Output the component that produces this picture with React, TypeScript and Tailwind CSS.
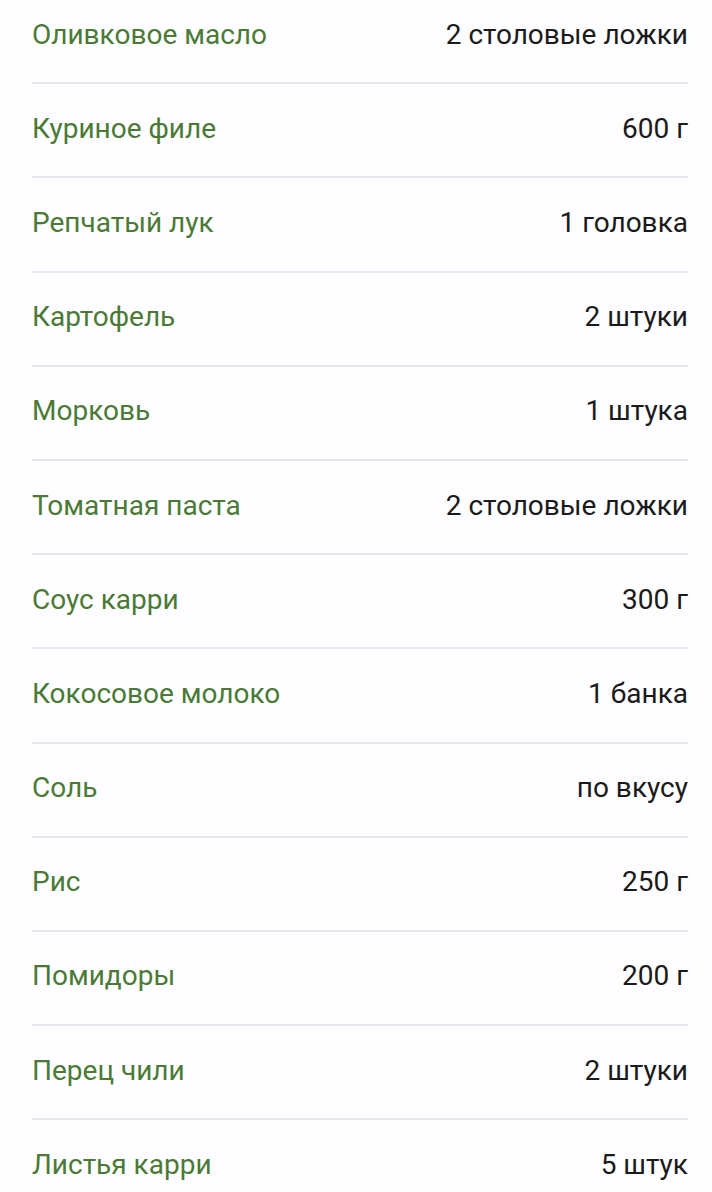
const ingredients = [
  { name: "Оливковое масло", amount: "2 столовые ложки" },
  { name: "Куриное филе", amount: "600 г" },
  { name: "Репчатый лук", amount: "1 головка" },
  { name: "Картофель", amount: "2 штуки" },
  { name: "Морковь", amount: "1 штука" },
  { name: "Томатная паста", amount: "2 столовые ложки" },
  { name: "Соус карри", amount: "300 г" },
  { name: "Кокосовое молоко", amount: "1 банка" },
  { name: "Соль", amount: "по вкусу" },
  { name: "Рис", amount: "250 г" },
  { name: "Помидоры", amount: "200 г" },
  { name: "Перец чили", amount: "2 штуки" },
  { name: "Листья карри", amount: "5 штук" },
];

const App = () => {
  return (
    <div className="min-h-[1192px] w-[712px] overflow-hidden bg-[#fefdff] font-['Roboto',sans-serif]">
      <ul className="mt-[-10px] px-[32px] pr-[24px]">
        {ingredients.map((item) => (
          <li
            key={item.name}
            className="flex h-[94.2px] items-center justify-between border-b-2 border-[#e8e6ea] pb-[3px] text-[28px] leading-none"
          >
            <span className="text-[#4a7a35]">{item.name}</span>
            <span className="text-[#1a1a1a]">{item.amount}</span>
          </li>
        ))}
      </ul>
    </div>
  );
};

export default App;
